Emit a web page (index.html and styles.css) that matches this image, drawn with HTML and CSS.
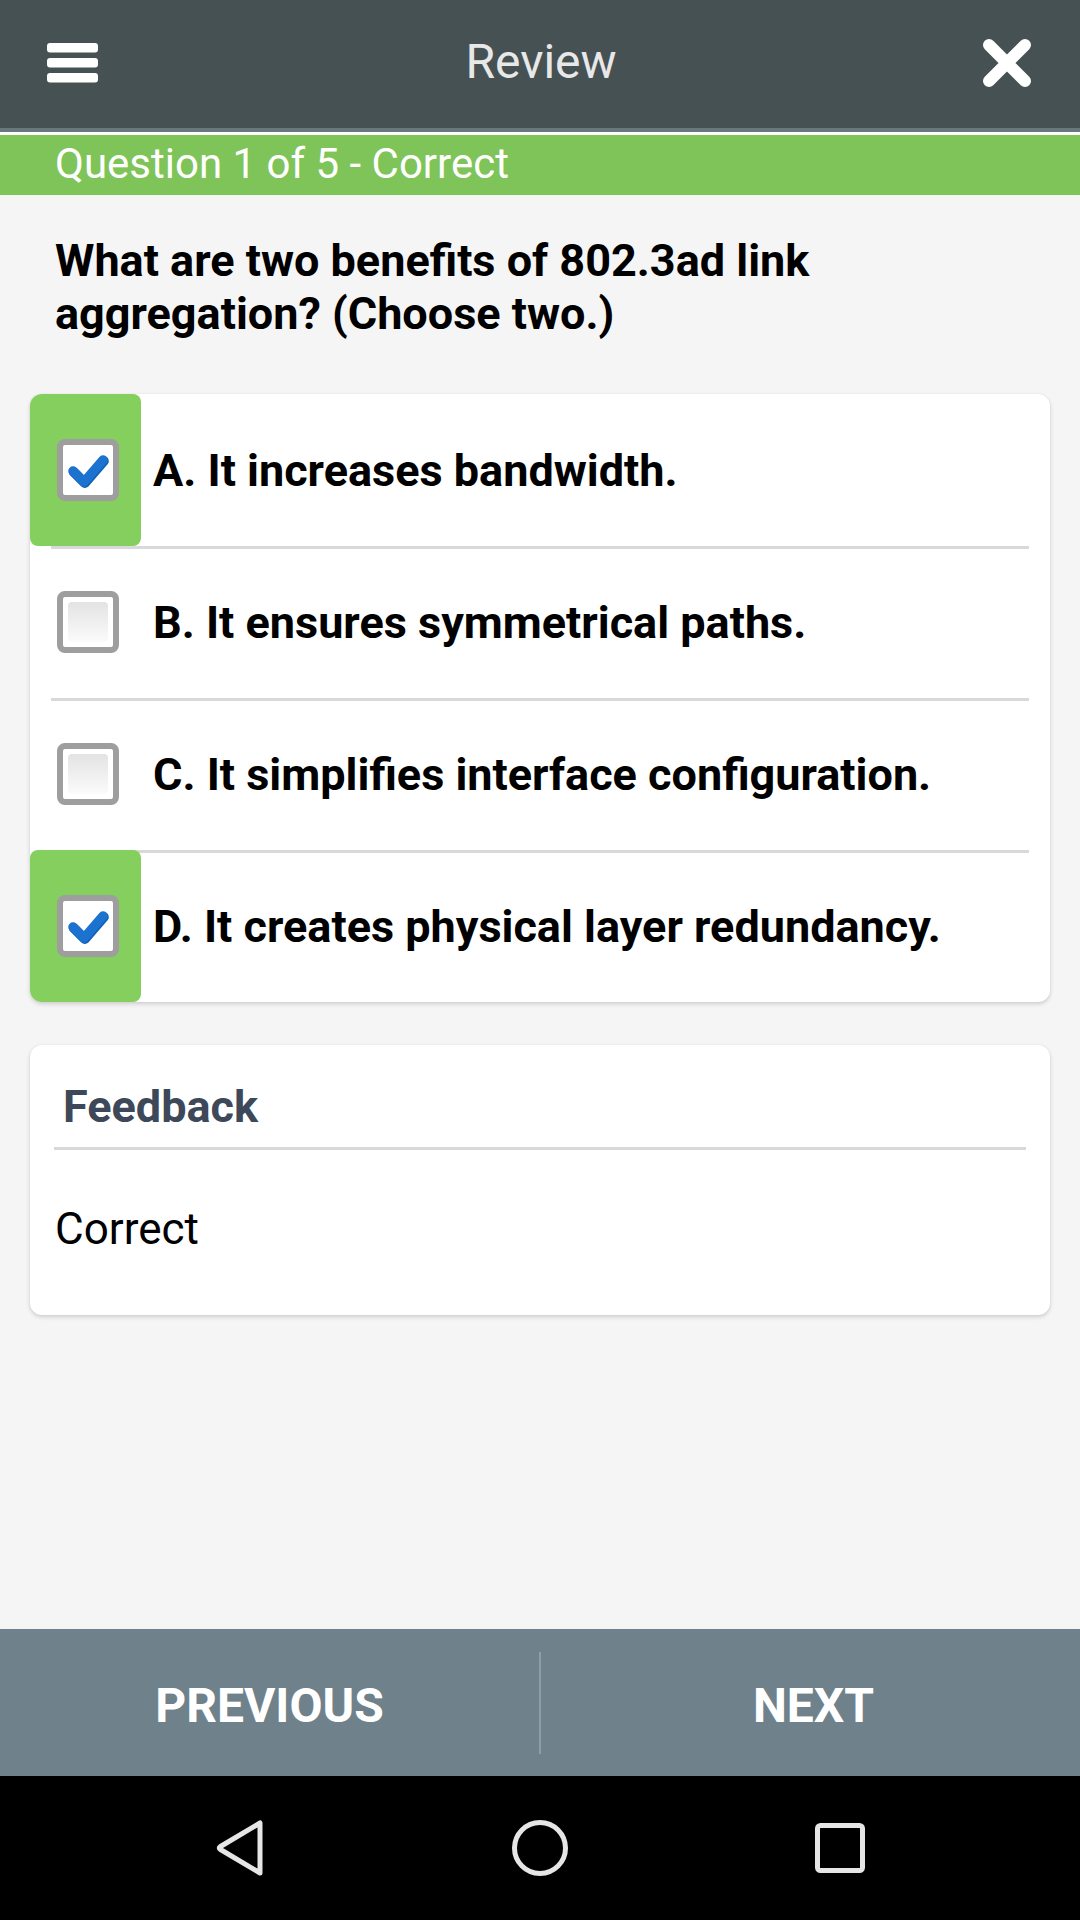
FILE: index.html
```html
<!DOCTYPE html>
<html lang="en">
<head>
<meta charset="utf-8">
<title>Review</title>
<link rel="stylesheet" href="styles.css">
</head>
<body>
<div class="screen">
  <header class="topbar">
    <svg class="menu-icon" width="51" height="40" viewBox="0 0 51 40" aria-hidden="true">
      <rect x="0" y="0" width="51" height="9.5" rx="3" fill="#fff"/>
      <rect x="0" y="15" width="51" height="9.5" rx="3" fill="#fff"/>
      <rect x="0" y="30" width="51" height="9.5" rx="3" fill="#fff"/>
    </svg>
    <div class="title">Review</div>
    <svg class="close-icon" width="50" height="48" viewBox="0 0 50 48" aria-hidden="true">
      <path d="M7 6 L43 42 M43 6 L7 42" stroke="#fff" stroke-width="12" stroke-linecap="round"/>
    </svg>
  </header>
  <div class="status">Question 1 of 5 - Correct</div>
  <main class="content">
    <h1 class="question">What are two benefits of 802.3ad link aggregation? (Choose two.)</h1>
    <section class="card options">
      <div class="option correct">
        <div class="check-cell">
          <span class="box checked">
            <svg class="tick" width="50" height="50" viewBox="0 0 50 50" aria-hidden="true">
              <path d="M10 26 L21 37 L40 15" fill="none" stroke="#0f5fb5" stroke-width="10" stroke-linecap="round" stroke-linejoin="round" transform="translate(0.8,1)"/>
              <path d="M10 26 L21 37 L40 15" fill="none" stroke="#1b72cf" stroke-width="9.5" stroke-linecap="round" stroke-linejoin="round"/>
            </svg>
          </span>
        </div>
        <div class="label">A. It increases bandwidth.</div>
      </div>
      <div class="option">
        <div class="check-cell"><span class="box"><span class="well"></span></span></div>
        <div class="label">B. It ensures symmetrical paths.</div>
      </div>
      <div class="option">
        <div class="check-cell"><span class="box"><span class="well"></span></span></div>
        <div class="label">C. It simplifies interface configuration.</div>
      </div>
      <div class="option correct">
        <div class="check-cell">
          <span class="box checked">
            <svg class="tick" width="50" height="50" viewBox="0 0 50 50" aria-hidden="true">
              <path d="M10 26 L21 37 L40 15" fill="none" stroke="#0f5fb5" stroke-width="10" stroke-linecap="round" stroke-linejoin="round" transform="translate(0.8,1)"/>
              <path d="M10 26 L21 37 L40 15" fill="none" stroke="#1b72cf" stroke-width="9.5" stroke-linecap="round" stroke-linejoin="round"/>
            </svg>
          </span>
        </div>
        <div class="label">D. It creates physical layer redundancy.</div>
      </div>
    </section>
    <section class="card feedback">
      <h2 class="feedback-title">Feedback</h2>
      <p class="feedback-text">Correct</p>
    </section>
  </main>
  <nav class="pager">
    <button class="pager-btn">PREVIOUS</button>
    <span class="pager-divider"></span>
    <button class="pager-btn pager-next">NEXT</button>
  </nav>
  <div class="sysnav">
    <svg class="nav-icon" width="60" height="60" viewBox="0 0 60 60" aria-hidden="true">
      <path d="M50 5 L50 55 L10.5 31.5 Q8 30 10.5 28.5 Z" fill="none" stroke="#e6e6e6" stroke-width="5" stroke-linejoin="round"/>
    </svg>
    <svg class="nav-icon" width="60" height="60" viewBox="0 0 60 60" aria-hidden="true">
      <circle cx="30" cy="30" r="25.5" fill="none" stroke="#e6e6e6" stroke-width="5"/>
    </svg>
    <svg class="nav-icon" width="60" height="60" viewBox="0 0 60 60" aria-hidden="true">
      <rect x="7.5" y="7.5" width="45" height="45" rx="3" fill="none" stroke="#e6e6e6" stroke-width="5"/>
    </svg>
  </div>
</div>
</body>
</html>
```

FILE: styles.css
```css
* { box-sizing: border-box; }

html, body {
  margin: 0;
  padding: 0;
}

body {
  width: 1080px;
  height: 1920px;
  background: #f5f5f5;
  font-family: Roboto, "Liberation Sans", Arial, sans-serif;
  color: #000;
}

.screen {
  display: flex;
  flex-direction: column;
  height: 1920px;
}

.topbar {
  height: 132px;
  background: #465154;
  border-bottom: 4px solid #67777b;
  display: flex;
  align-items: center;
  padding: 0 47px 4px 47px;
}

.menu-icon { display: block; margin-top: 2px; }

.title {
  flex: 1;
  text-align: center;
  color: #e8e8e8;
  font-size: 48px;
  line-height: 128px;
  padding-left: 2px;
}

.close-icon { display: block; margin-right: 1px; margin-top: 1px; }

.status {
  height: 63px;
  border-top: 3px solid #ffffff;
  background: #7fc458;
  color: #fff;
  font-size: 42px;
  line-height: 58px;
  padding-left: 55px;
}

.content {
  flex: 1;
  padding: 0 30px;
}

.question {
  margin: 39px 0 54px 25px;
  font-size: 45px;
  line-height: 53px;
  font-weight: 700;
  width: 820px;
}

.card {
  background: #fff;
  border-radius: 12px;
  box-shadow: 0 2px 4px rgba(0, 0, 0, 0.16), 0 0 2px rgba(0, 0, 0, 0.06);
  overflow: hidden;
}

.option {
  display: flex;
  height: 152px;
  position: relative;
}

.option + .option::before {
  content: "";
  position: absolute;
  top: 0;
  left: 21px;
  right: 21px;
  height: 3px;
  background: #d9d9d9;
}

.check-cell {
  width: 111px;
  flex: none;
  display: flex;
  align-items: center;
  justify-content: center;
  padding-left: 5px;
  position: relative;
  z-index: 1;
  border-radius: 8px;
}

.option.correct .check-cell { background: #84cf5e; }

.box {
  width: 62px;
  height: 62px;
  border: 6px solid #9e9e9e;
  border-radius: 8px;
  background: #fff;
  display: flex;
  align-items: center;
  justify-content: center;
}

.box .well {
  width: 40px;
  height: 40px;
  border-radius: 4px;
  background: linear-gradient(#e3e3e3, #fbfbfb);
}

.tick { display: block; }

.label {
  flex: 1;
  display: flex;
  align-items: center;
  padding-left: 12px;
  font-size: 45px;
  font-weight: 700;
  padding-top: 1px;
}

.feedback {
  margin-top: 43px;
  height: 270px;
  padding: 0 24px;
}

.feedback-title {
  margin: 0;
  padding: 37px 0 15px 9px;
  font-size: 45px;
  line-height: 50px;
  font-weight: 700;
  color: #3d4859;
  border-bottom: 3px solid #d9d9d9;
}

.feedback-text {
  margin: 54px 0 0 1px;
  font-size: 44px;
  line-height: 50px;
}

.pager {
  height: 147px;
  background: #6f828b;
  display: flex;
  align-items: center;
}

.pager-btn {
  flex: 1 1 0;
  min-width: 0;
  height: 100%;
  background: none;
  border: 0;
  padding: 6px 0 0 0;
  color: #fff;
  font-family: Roboto, "Liberation Sans", Arial, sans-serif;
  font-size: 48px;
  font-weight: 700;
}

.pager-next { text-indent: 6px; }

.pager-divider {
  width: 2px;
  height: 102px;
  background: #8e9ea5;
  flex: none;
}

.sysnav {
  height: 144px;
  background: #000;
  display: flex;
  align-items: center;
  justify-content: space-between;
  padding: 0 210px;
}

.nav-icon { display: block; }
```
